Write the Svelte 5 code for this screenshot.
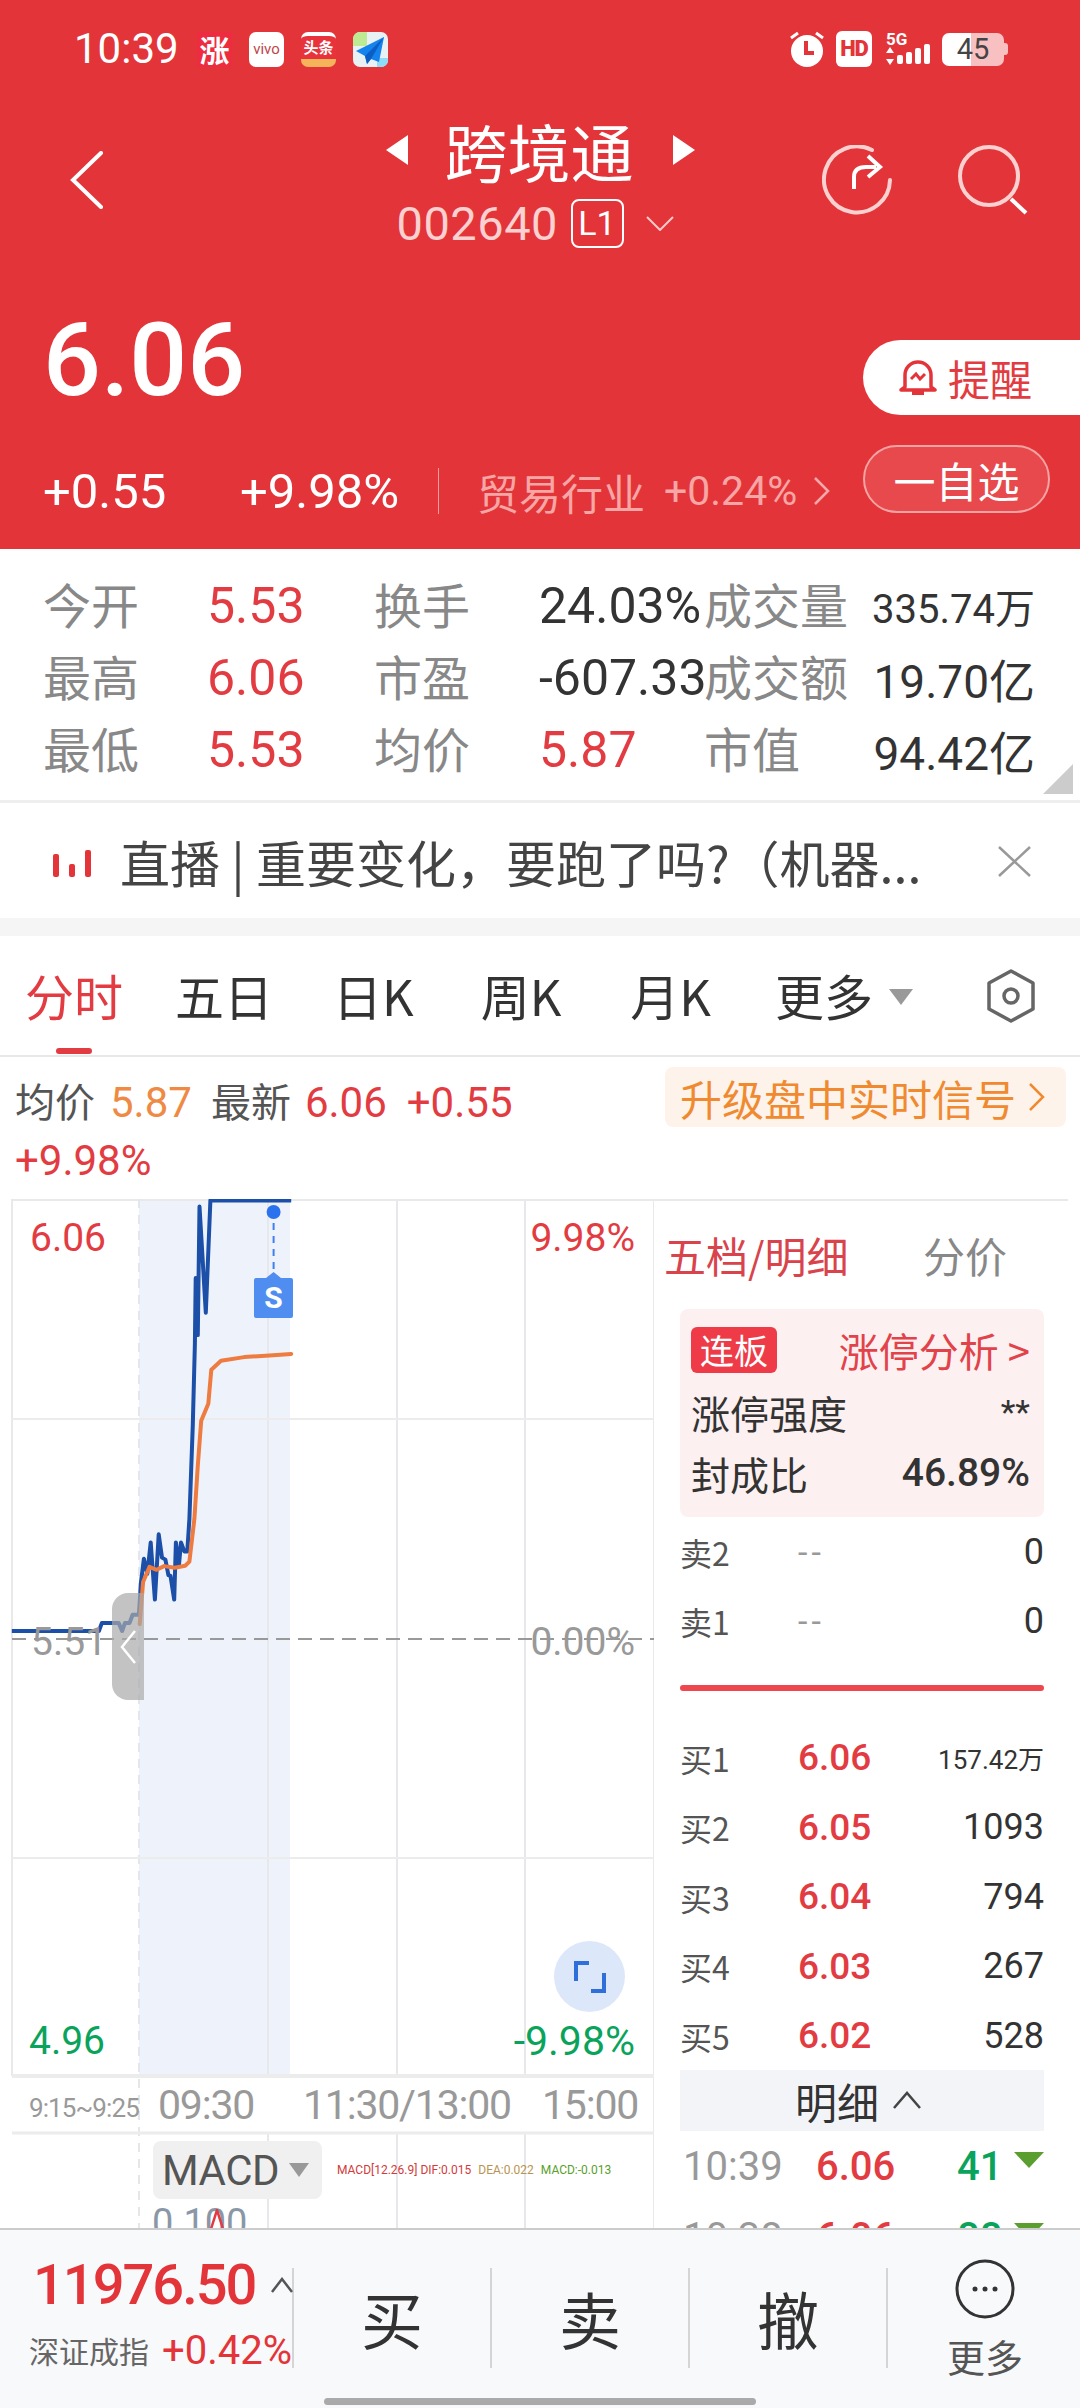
<script>
  const sx = 1 / 2.376, sy = 1 / 2.45, oy = 1180 - 1199;
  const conv = (p) => p.map(([x, y]) => `${(x * sx).toFixed(1)},${(y * sy + oy).toFixed(1)}`).join(' ');
  const blue = conv([[28,1105],[235,1105],[242,1085],[282,1085],[290,1105],[297,1085],[308,1085],[315,1065],[330,1065],[335,985],[342,928],[350,965],[358,888],[368,1028],[377,868],[385,925],[393,930],[400,968],[405,970],[414,1028],[418,888],[425,945],[430,888],[438,910],[445,910],[450,830],[458,600],[463,400],[465,240],[470,380],[474,65],[489,325],[500,50],[692,50]]);
  const orange = conv([[332,1088],[340,985],[355,948],[372,955],[390,946],[415,950],[440,945],[450,935],[462,830],[470,700],[478,590],[495,548],[502,465],[525,443],[580,434],[640,430],[692,426]]);
  const stats = [
    ['今开','5.53','red','换手','24.03%','','成交量','335.74万','s'],
    ['最高','6.06','red','市盈','-607.33','','成交额','19.70亿',''],
    ['最低','5.53','red','均价','5.87','red','市值','94.42亿','']
  ];
  const tabs = ['五日','日K','周K','月K'];
  const sells = [['卖2','0'],['卖1','0']];
  const buys = [['买1','6.06','157.42万'],['买2','6.05','1093'],['买3','6.04','794'],['买4','6.03','267'],['买5','6.02','528']];
  const vLines = [268, 397, 525];
</script>

<div class="page">
  <header class="hero">
    <div class="status">
      <span class="time">10:39</span>
      <span class="app a1">涨</span>
      <span class="app a2">vivo</span>
      <span class="app a3"><b>头条</b><i></i></span>
      <svg class="app" viewBox="0 0 35 35"><rect width="35" height="35" fill="#e8f1f4"/><rect width="14" height="14" fill="#bdea92"/><rect x="24" y="26" width="11" height="9" fill="#8fdcf8"/><path d="M31 5 3 19l9 5 2 8 4-5 8 3z" fill="#1583ee"/><path d="M31 5 12 24l2 8 4-5z" fill="#0b5fc4"/></svg>
      <span class="sp"></span>
      <svg class="sicon" viewBox="0 0 36 36"><path d="M2 7 9 2M34 7l-7-5" stroke="#fff" stroke-width="3"/><circle cx="18" cy="20" r="16" fill="#fff"/><path d="M17 10v12h8" stroke="#e33539" stroke-width="4" fill="none"/></svg>
      <span class="hd">HD</span>
      <svg class="signal" viewBox="0 0 46 36"><text x="0" y="14" class="fg">5G</text><path d="M4 16l4 6H0zM4 34l-4-6h8z" fill="#fff"/><rect x="11" y="24" width="6" height="9" rx="2" fill="#fff"/><rect x="20" y="21" width="6" height="12" rx="2" fill="#fff"/><rect x="29" y="17" width="6" height="16" rx="2" fill="#fff"/><rect x="38" y="13" width="6" height="20" rx="2" fill="#fff"/></svg>
      <span class="batt"><span>45</span></span>
    </div>

    <div class="nav">
      <svg class="back" viewBox="0 0 34 58"><path d="M31 2 3 29l28 27" fill="none" stroke="#fff" stroke-width="4" stroke-linecap="round"/></svg>
      <div class="titleblock">
        <div class="titleline">
          <svg class="tri" viewBox="0 0 22 30"><path d="M22 0v30L0 15z" fill="#fff"/></svg>
          <span class="title">跨境通</span>
          <svg class="tri" viewBox="0 0 22 30"><path d="M0 0v30l22-15z" fill="#fff"/></svg>
        </div>
        <div class="subline">
          <span class="code">002640</span>
          <span class="l1">L1</span>
          <svg class="vee" viewBox="0 0 28 15"><path d="M1 1l13 13L27 1" fill="none" stroke="#fbc9c9" stroke-width="2"/></svg>
        </div>
      </div>
      <svg class="navicon share" viewBox="0 0 70 70"><path d="M50 5A33 33 0 1 0 68 35" fill="none" stroke="#fbd0d0" stroke-width="4" stroke-linecap="round"/><path d="M32 44V32q0-10 12-10h10M46 11l12 11-12 10" fill="none" stroke="#fff" stroke-width="4"/></svg>
      <svg class="navicon search" viewBox="0 0 70 70"><circle cx="31" cy="31" r="29" fill="none" stroke="#fbd0d0" stroke-width="4"/><path d="M53 54l15 14" stroke="#fff" stroke-width="4"/></svg>
    </div>

    <div class="priceblock">
      <div class="price">6.06</div>
      <div class="remind">
        <svg viewBox="0 0 38 38" class="bell"><path d="M6 28V16a13 13 0 0 1 26 0v12l4 3H2z" fill="none" stroke="#e33539" stroke-width="3.5" stroke-linejoin="round"/><path d="M13 34h12" stroke="#e33539" stroke-width="4"/><path d="M12 20l5-5 4 5 5-5" fill="none" stroke="#e33539" stroke-width="3"/></svg>
        <span>提醒</span>
      </div>
      <div class="changes">
        <span class="chg1">+0.55</span>
        <span class="chg2">+9.98%</span>
        <span class="vsep"></span>
        <span class="ind">贸易行业</span>
        <span class="indp">+0.24%</span>
        <svg class="indc" viewBox="0 0 17 30"><path d="M2 2l13 13L2 28" fill="none" stroke="#f8a9a9" stroke-width="2.5"/></svg>
      </div>
      <div class="fav"><span>一自选</span></div>
    </div>
  </header>

  <section class="stats">
    {#each stats as r}
      <div class="srow">
        <span class="lab">{r[0]}</span>
        <span class="val {r[2]}">{r[1]}</span>
        <span class="lab">{r[3]}</span>
        <span class="val {r[5]}">{r[4]}</span>
        <span class="lab">{r[6]}</span>
        <span class="val3 {r[8]}">{r[7]}</span>
      </div>
    {/each}
    <svg class="corner" viewBox="0 0 30 30"><path d="M30 0v30H0z" fill="#ccc"/></svg>
  </section>

  <section class="news">
    <svg class="bars" viewBox="0 0 38 27"><rect x="0" y="4" width="6" height="23" rx="2" fill="#e33539"/><rect x="16" y="14" width="6" height="13" rx="2" fill="#e33539"/><rect x="32" y="0" width="6" height="27" rx="2" fill="#e33539"/></svg>
    <span class="newstext">直播 | 重要变化，要跑了吗?（机器...</span>
    <svg class="close" viewBox="0 0 33 31"><path d="M1 1l31 29M32 1 1 30" stroke="#999" stroke-width="2.5"/></svg>
  </section>

  <div class="band"></div>

  <nav class="tabs">
    <span class="tab active">分时<i></i></span>
    {#each tabs as t, i}<span class="tab m{i}">{t}</span>{/each}
    <span class="tab more">更多</span>
    <svg class="caret" viewBox="0 0 24 16"><path d="M0 0h24L12 16z" fill="#999"/></svg>
    <svg class="gear" viewBox="0 0 50 54"><path d="M25 2 47 14v26L25 52 3 40V14z" fill="none" stroke="#666" stroke-width="3.5" stroke-linejoin="round"/><circle cx="25" cy="27" r="7" fill="none" stroke="#666" stroke-width="3.5"/></svg>
  </nav>

  <section class="info">
    <div class="infotext">
      <span class="il">均价</span><span class="orange g1">5.87</span><span class="il il2">最新</span><span class="red g2">6.06</span><span class="red gapl">+0.55</span>
      <div class="red">+9.98%</div>
    </div>
    <div class="signal-box">升级盘中实时信号<svg viewBox="0 0 17 30"><path d="M2 2l13 13L2 28" fill="none" stroke="#f08a30" stroke-width="2.5"/></svg></div>
  </section>

  <section class="market">
    <div class="chart">
      <svg class="plot" viewBox="0 0 654 1029" width="654" height="1029">
        <rect x="139" y="0" width="151" height="877" fill="#eef3fb"/>
        <path d="M12 1H654" stroke="#e9e9e9" stroke-width="2"/>
        <path d="M12 0V877M654 0V1029" stroke="#e9e9e9" stroke-width="2"/>
        {#each vLines as x}<path d="M{x} 0V877M{x} 934V1029" stroke="#e6e8ec" stroke-width="2"/>{/each}
        <path d="M139 0V1029" stroke="#e3e6ea" stroke-width="2" stroke-dasharray="9 7"/>
        <path d="M12 220H654M12 659H654" stroke="#ececec" stroke-width="2"/>
        <path d="M12 877H654" stroke="#ececec" stroke-width="4"/>
        <path d="M12 934H654" stroke="#ececec" stroke-width="3"/>
        <path d="M12 440H654" stroke="#999" stroke-width="2" stroke-dasharray="14 8"/>
        <polyline points={blue} fill="none" stroke="#1b4fa8" stroke-width="4" stroke-linejoin="round"/>
        <polyline points={orange} fill="none" stroke="#ee7b3f" stroke-width="4" stroke-linejoin="round" stroke-linecap="round"/>
        <circle cx="273.6" cy="13" r="7" fill="#2b72ee"/>
        <path d="M273.6 24V72" stroke="#3f7fee" stroke-width="2" stroke-dasharray="7 6"/>
        <path d="M256 79h10l7.600-6 7.400 6h10a2 2 0 0 1 2 2v36a2 2 0 0 1-2 2h-35a2 2 0 0 1-2-2V81a2 2 0 0 1 2-2z" fill="#4f8ef0"/>
      </svg>
      <span class="badge-s">S</span>
      <span class="cl cl-tl red">6.06</span>
      <span class="cl cl-tr red">9.98%</span>
      <span class="cl cl-ml">5.51</span>
      <span class="cl cl-mr">0.00%</span>
      <span class="cl cl-bl green">4.96</span>
      <span class="cl cl-br green">-9.98%</span>
      <div class="handle"><svg viewBox="0 0 16 34"><path d="M15 1 2 17l13 16" fill="none" stroke="#fff" stroke-width="2.5"/></svg></div>
      <div class="expand"><svg viewBox="0 0 32 32"><path d="M15 2H2v18M17 30h13V12" fill="none" stroke="#2e6fdc" stroke-width="4"/></svg></div>
      <span class="tx x0">9:15~9:25</span>
      <span class="tx x1">09:30</span>
      <span class="tx x2">11:30/13:00</span>
      <span class="tx x3">15:00</span>
      <div class="macd">MACD<svg viewBox="0 0 20 14"><path d="M0 0h20L10 14z" fill="#999"/></svg></div>
      <div class="legend"><span class="c1">MACD[12.26.9] DIF:0.015</span><span class="c2">DEA:0.022</span><span class="c3">MACD:-0.013</span></div>
      <span class="macdv">0.100</span>
      <svg class="spike" viewBox="0 0 14 20"><path d="M1 20 7 1l6 19" fill="none" stroke="#e23c42" stroke-width="2.500"/></svg>
    </div>

    <aside class="depth">
      <div class="dtabs"><span class="dt1">五档/明细</span><span class="dt2">分价</span></div>
      <div class="limit">
        <div class="lr"><span class="tag">连板</span><span class="lnk">涨停分析 &gt;</span></div>
        <div class="lr"><span>涨停强度</span><span class="stars">**</span></div>
        <div class="lr"><span>封成比</span><span class="pct">46.89%</span></div>
      </div>
      <div class="sells">
        {#each sells as s}
          <div class="q"><span class="qn">{s[0]}</span><span class="qp dash">--</span><span class="qv">{s[1]}</span></div>
        {/each}
      </div>
      <div class="sep"></div>
      <div class="buys">
        {#each buys as b, i}
          <div class="q"><span class="qn">{b[0]}</span><span class="qp red">{b[1]}</span><span class="qv" class:small={i === 0}>{b[2]}</span></div>
        {/each}
      </div>
      <div class="detail"><span>明细</span><svg viewBox="0 0 28 18"><path d="M1 17 14 2l13 15" fill="none" stroke="#444" stroke-width="2.500"/></svg></div>
      <div class="tick"><span class="tt">10:39</span><span class="tp red">6.06</span><span class="tv green">41</span><svg viewBox="0 0 30 16"><path d="M0 0h30L15 16z" fill="#5a9e30"/></svg></div>
      <div class="tick"><span class="tt">10:38</span><span class="tp red">6.06</span><span class="tv green">88</span><svg viewBox="0 0 30 16"><path d="M0 0h30L15 16z" fill="#5a9e30"/></svg></div>
    </aside>
  </section>

  <footer class="bottom">
    <div class="index">
      <div class="idx1"><span>11976.50</span><svg viewBox="0 0 22 16"><path d="M1 15 11 2l10 13" fill="none" stroke="#555" stroke-width="2.500"/></svg></div>
      <div class="idx2"><span class="idxn">深证成指</span><span class="idxp">+0.42%</span></div>
    </div>
    <div class="act">买</div>
    <div class="act">卖</div>
    <div class="act">撤</div>
    <div class="act moreact">
      <svg viewBox="0 0 60 60"><circle cx="30" cy="30" r="28" fill="none" stroke="#333" stroke-width="3"/><circle cx="20" cy="30" r="2.500" fill="#333"/><circle cx="30" cy="30" r="2.500" fill="#333"/><circle cx="40" cy="30" r="2.500" fill="#333"/></svg>
      <span>更多</span>
    </div>
    <div class="homebar"></div>
  </footer>
</div>

<style>
  :global(body) { margin: 0; background: #fff; }
  .page {
    width: 1080px; height: 2408px; overflow: hidden; display: flex; flex-direction: column;
    font-family: Roboto, "Noto Sans CJK SC", sans-serif; color: #333;
  }
  .red { color: #e23c42; }
  .green { color: #0aa35c; }
  .orange { color: #ef8a45; }

  .hero { background: #e33539; height: 549px; flex: none; color: #fff; box-sizing: border-box; }
  .status { height: 80px; display: flex; align-items: center; padding: 18px 76px 0 74px; box-sizing: border-box; }
  .time { font-size: 42px; width: 123px; line-height: 40px; white-space: nowrap; }
  .app { width: 35px; height: 35px; margin-right: 17px; flex: none; border-radius: 7px; display: flex; align-items: center; justify-content: center; overflow: hidden; position: relative; line-height: 1; font-family: "Noto Sans CJK SC", sans-serif; }
  .a1 { background: #ee2c3f; color: #fff; font-size: 30px; font-weight: 700; border-radius: 0; }
  .a2 { background: #fff; color: #c0454a; font-size: 15px; font-family: Roboto; }
  .a3 { background: #e8323c; border-top: 4px solid #fff; box-sizing: border-box; color: #fff; align-items: flex-start; }
  .a3 b { font-size: 15px; line-height: 20px; margin-top: 1px; white-space: nowrap; }
  .a3 i { position: absolute; left: 0; right: 0; bottom: 0; height: 8px; background: #f5b35a; }
  .sp { flex: 1; }
  .sicon { width: 36px; height: 36px; margin-right: 11px; }
  .hd { width: 36px; height: 36px; background: #fff; color: #e33539; border-radius: 6px; font-size: 22px; font-weight: 900; text-align: center; line-height: 36px; margin-right: 14px; letter-spacing: -1px; }
  .signal { width: 46px; height: 36px; margin-right: 10px; }
  .fg { font: 700 17px Roboto; fill: #fff; }
  .batt { width: 62px; height: 33px; border-radius: 7px; background: linear-gradient(90deg, #fff 47%, #f8c0c0 47%); color: #444; font-size: 29px; text-align: center; line-height: 33px; position: relative; }
  .batt::after { content: ""; position: absolute; right: -4px; top: 10px; width: 4px; height: 12px; background: #f8c0c0; border-radius: 0 3px 3px 0; }

  .nav { height: 260px; position: relative; display: flex; }
  .back { position: absolute; left: 70px; top: 71px; width: 34px; height: 58px; }
  .titleblock { margin: 0 auto; display: flex; flex-direction: column; align-items: center; padding-top: 34px; }
  .titleline { display: flex; align-items: center; height: 72px; gap: 37px; }
  .tri { width: 22px; height: 30px; }
  .title { font-size: 63px; line-height: 72px; font-family: "Noto Sans CJK SC", sans-serif; width: 191px; white-space: nowrap; }
  .subline { display: flex; align-items: center; height: 60px; margin-top: 7px; margin-right: 10px; }
  .code { font-size: 47px; color: #fbd0d0; letter-spacing: 0.5px; width: 174px; }
  .l1 { width: 53px; height: 49px; border: 2px solid #fff; border-radius: 8px; box-sizing: border-box; font-size: 34px; text-align: center; line-height: 44px; }
  .vee { width: 28px; height: 15px; margin-left: 22px; }
  .navicon { position: absolute; width: 70px; height: 70px; top: 65px; }
  .share { left: 822px; }
  .search { left: 958px; }

  .priceblock { display: grid; grid-template-columns: 863px 217px; grid-template-rows: 75px 68px; row-gap: 30px; }
  .price { font-size: 102px; line-height: 75px; margin: -17px 0 0 43px; font-weight: 500; }
  .remind { background: #fff; border-radius: 38px 0 0 38px; color: #e23c42; display: flex; align-items: center; padding-left: 36px; gap: 11px; font-size: 42px; font-family: "Noto Sans CJK SC", sans-serif; }
  .bell { width: 38px; height: 38px; }
  .changes { display: flex; align-items: center; padding: 24px 0 0 43px; font-size: 49px; white-space: nowrap; }
  .chg1 { width: 197px; }
  .chg2 { width: 198px; }
  .vsep { width: 1px; height: 46px; background: #f39d9d; margin-right: 38px; }
  .ind { font-size: 42px; color: #f7a6a6; width: 187px; font-family: "Noto Sans CJK SC", sans-serif; }
  .indp { font-size: 41px; color: #f7a6a6; width: 149px; }
  .indc { width: 17px; height: 30px; flex: none; }
  .fav { width: 187px; background: #e7494d; border: 2px solid #f5a3a3; border-radius: 34px; box-sizing: border-box; display: flex; align-items: center; justify-content: center; font-size: 42px; font-family: "Noto Sans CJK SC", sans-serif; }

  .stats { height: 254px; flex: none; box-sizing: border-box; padding: 19px 45px 0 43px; border-bottom: 3px solid #eee; position: relative; }
  .srow { display: grid; grid-template-columns: 164px 167px 165px 165px 150px 1fr; height: 72px; align-items: center; white-space: nowrap; }
  .lab { font-size: 48px; color: #888; font-family: "Noto Sans CJK SC", sans-serif; margin-bottom: 6px; }
  .val { font-size: 50px; color: #333; }
  .val.red { color: #e23c42; }
  .val3 { font-size: 46px; text-align: right; color: #333; }
  .val3.s { font-size: 40px; }
  .corner { position: absolute; right: 7px; bottom: 6px; width: 30px; height: 30px; }

  .news { height: 115px; flex: none; display: flex; align-items: center; padding-left: 53px; position: relative; }
  .bars { width: 38px; height: 27px; margin-right: 29px; margin-top: 6px; }
  .newstext { font-size: 50px; color: #444; font-family: "Noto Sans CJK SC", sans-serif; white-space: nowrap; }
  .close { width: 33px; height: 31px; position: absolute; left: 998px; top: 43px; }
  .band { height: 18px; background: #f5f5f5; flex: none; }

  .tabs { height: 121px; flex: none; position: relative; border-bottom: 2px solid #e8e8e8; box-sizing: border-box; font-family: "Noto Sans CJK SC", sans-serif; font-size: 49px; color: #333; display: flex; }
  .tab { line-height: 117px; height: 119px; position: relative; white-space: nowrap; }
  .active { margin-left: 25px; color: #e23c42; }
  .active i { position: absolute; left: 31px; bottom: 1px; width: 36px; height: 6px; border-radius: 3px; background: #e23c42; }
  .m0 { margin-left: 52px; }
  .m1 { margin-left: 60px; }
  .m2 { margin-left: 67px; }
  .m3 { margin-left: 69px; }
  .more { margin-left: 64px; }
  .caret { width: 24px; height: 16px; margin: 53px 0 0 16px; flex: none; }
  .gear { width: 50px; height: 54px; margin: 33px 0 0 73px; flex: none; }

  .info { height: 142px; flex: none; box-sizing: border-box; padding: 10px 14px 0 15px; display: flex; justify-content: space-between; align-items: flex-start; font-size: 42px; }
  .infotext { line-height: 58px; white-space: nowrap; padding-top: 4px; }
  .il { color: #555; font-size: 40px; font-family: "Noto Sans CJK SC", sans-serif; }
  .g1 { margin-left: 15px; }
  .g2 { margin-left: 14px; }
  .il2 { margin-left: 19px; }
  .gapl { margin-left: 20px; }
  .signal-box { width: 401px; height: 60px; background: #fdf3ea; border-radius: 8px; color: #f08a30; font-size: 42px; display: flex; align-items: center; padding-left: 15px; box-sizing: border-box; font-family: "Noto Sans CJK SC", sans-serif; white-space: nowrap; }
  .signal-box svg { width: 17px; height: 30px; margin-left: 12px; }

  .market { height: 1029px; flex: none; display: flex; overflow: hidden; position: relative; }
  .chart { width: 654px; height: 1029px; position: relative; flex: none; }
  .plot { display: block; }
  .badge-s { position: absolute; left: 254px; top: 79px; width: 39px; height: 40px; color: #fff; font-size: 30px; font-weight: 700; line-height: 40px; text-align: center; }
  .cl { position: absolute; font-size: 39px; line-height: 44px; }
  .cl-tl { left: 30px; top: 17px; }
  .cl-tr { right: 19px; top: 17px; }
  .cl-ml { left: 31px; top: 421px; color: #999; }
  .cl-mr { right: 19px; top: 421px; color: #999; }
  .cl-bl { left: 29px; top: 820px; }
  .cl-br { right: 19px; top: 820px; font-size: 41px; }
  .handle { position: absolute; left: 112px; top: 394px; width: 32px; height: 107px; background: rgba(170,170,170,.7); border-radius: 16px 0 0 16px; display: flex; align-items: center; justify-content: center; }
  .handle svg { width: 16px; height: 34px; }
  .expand { position: absolute; left: 554px; top: 742px; width: 71px; height: 71px; border-radius: 50%; background: #dce7fa; display: flex; align-items: center; justify-content: center; }
  .expand svg { width: 32px; height: 32px; }
  .tx { position: absolute; color: #999; font-size: 41px; line-height: 44px; top: 884px; white-space: nowrap; letter-spacing: -1.2px; }
  .x0 { left: 29px; font-size: 26px; top: 887px; letter-spacing: -.9px; }
  .x1 { left: 158px; }
  .x2 { left: 303px; }
  .x3 { left: 542px; }
  .macd { position: absolute; left: 153px; top: 942px; width: 169px; height: 58px; background: #f0f0f0; border-radius: 8px; display: flex; align-items: center; padding-left: 9px; box-sizing: border-box; font-size: 42px; color: #555; letter-spacing: -.5px; }
  .macd svg { width: 20px; height: 14px; margin-left: 10px; }
  .legend { position: absolute; left: 337px; top: 960px; font-size: 12px; line-height: 22px; white-space: nowrap; display: flex; gap: 7px; }
  .c1 { color: #d23b3b; }
  .c2 { color: #b79550; }
  .c3 { color: #5aa02c; }
  .macdv { position: absolute; left: 152px; top: 1000px; font-size: 38px; color: #8a97a6; line-height: 48px; }
  .spike { position: absolute; left: 210px; top: 1010px; width: 14px; height: 20px; }

  .depth { width: 426px; flex: none; box-sizing: border-box; padding-left: 26px; padding-right: 36px; position: relative; }
  .depth::before { content: ""; position: absolute; left: 0; right: 12px; top: 0; height: 2px; background: #e9e9e9; }
  .dtabs { height: 110px; display: flex; align-items: center; font-size: 42px; margin-left: -16px; font-family: "Noto Sans CJK SC", sans-serif; }
  .dt1 { color: #d9434b; width: 259px; white-space: nowrap; }
  .dt2 { color: #888; }
  .limit { background: #fdf0f0; border-radius: 8px; height: 208px; padding: 18px 14px 0 11px; box-sizing: border-box; font-family: "Noto Sans CJK SC", sans-serif; font-size: 39px; color: #333; }
  .lr { display: flex; justify-content: space-between; align-items: center; height: 61px; }
  .lr:first-child { height: 46px; margin-bottom: 8px; }
  .tag { background: #ee3b47; color: #fff; font-size: 34px; padding: 0 9px; border-radius: 6px; line-height: 46px; }
  .lnk { color: #e2434b; font-size: 40px; }
  .stars { font-family: Roboto; font-size: 34px; }
  .pct { font-family: Roboto; font-size: 39px; font-weight: 500; }
  .q { height: 69.500px; display: flex; align-items: center; position: relative; }
  .sells .q { height: 69px; }
  .qn { width: 118px; font-size: 32px; color: #555; font-family: "Noto Sans CJK SC", sans-serif; }
  .qp { font-size: 37px; font-weight: 500; }
  .qp.dash { color: #999; font-weight: 400; font-size: 34px; letter-spacing: 4px; }
  .qv { margin-left: auto; font-size: 36px; color: #333; }
  .qv.small { font-size: 26px; }
  .sep { height: 6px; background: #ef474e; border-radius: 3px; margin-top: 30px; margin-bottom: 32px; }
  .detail { height: 61px; background: #f2f4f8; display: flex; align-items: center; justify-content: center; gap: 14px; font-size: 42px; padding-right: 8px; box-sizing: border-box; font-family: "Noto Sans CJK SC", sans-serif; margin-top: -1px; }
  .detail svg { width: 28px; height: 18px; }
  .tick { height: 70px; display: flex; align-items: center; font-size: 40px; margin-top: 1px; }
  .tt { color: #999; width: 133px; margin-left: 3px; }
  .tp { width: 141px; font-weight: 500; }
  .tv { width: 57px; font-weight: 500; }
  .tick svg { width: 30px; height: 16px; margin-top: -14px; }

  .bottom { height: 180px; flex: none; background: #f8f9fb; border-top: 2px solid #ccc; box-sizing: border-box; display: flex; position: relative; padding-top: 38px; }
  .index { width: 294px; height: 100px; flex: none; padding-left: 33px; box-sizing: border-box; border-right: 2px solid #d5d5d5; white-space: nowrap; }
  .idx1 { display: flex; align-items: center; height: 50px; margin-top: -8px; font-size: 56px; letter-spacing: -2px; color: #e33539; font-weight: 500; }
  .idx1 svg { width: 22px; height: 16px; margin-left: 16px; flex: none; }
  .idx2 { display: flex; align-items: center; height: 56px; margin-top: 12px; margin-left: -4px; }
  .idxn { font-size: 30px; color: #666; width: 135px; font-family: "Noto Sans CJK SC", sans-serif; }
  .idxp { font-size: 40px; color: #e33539; }
  .act { width: 198px; height: 100px; flex: none; border-right: 2px solid #d5d5d5; box-sizing: border-box; font-size: 62px; text-align: center; line-height: 100px; color: #333; font-family: "Noto Sans CJK SC", sans-serif; }
  .moreact { border: 0; display: flex; flex-direction: column; align-items: center; line-height: normal; width: 194px; height: auto; margin-top: -9px; }
  .moreact svg { width: 60px; height: 60px; flex: none; }
  .moreact span { font-size: 38px; color: #555; line-height: 46px; margin-top: 14px; }
  .homebar { position: absolute; left: 324px; bottom: 3px; width: 432px; height: 7px; background: #aaa; border-radius: 4px; }
</style>
